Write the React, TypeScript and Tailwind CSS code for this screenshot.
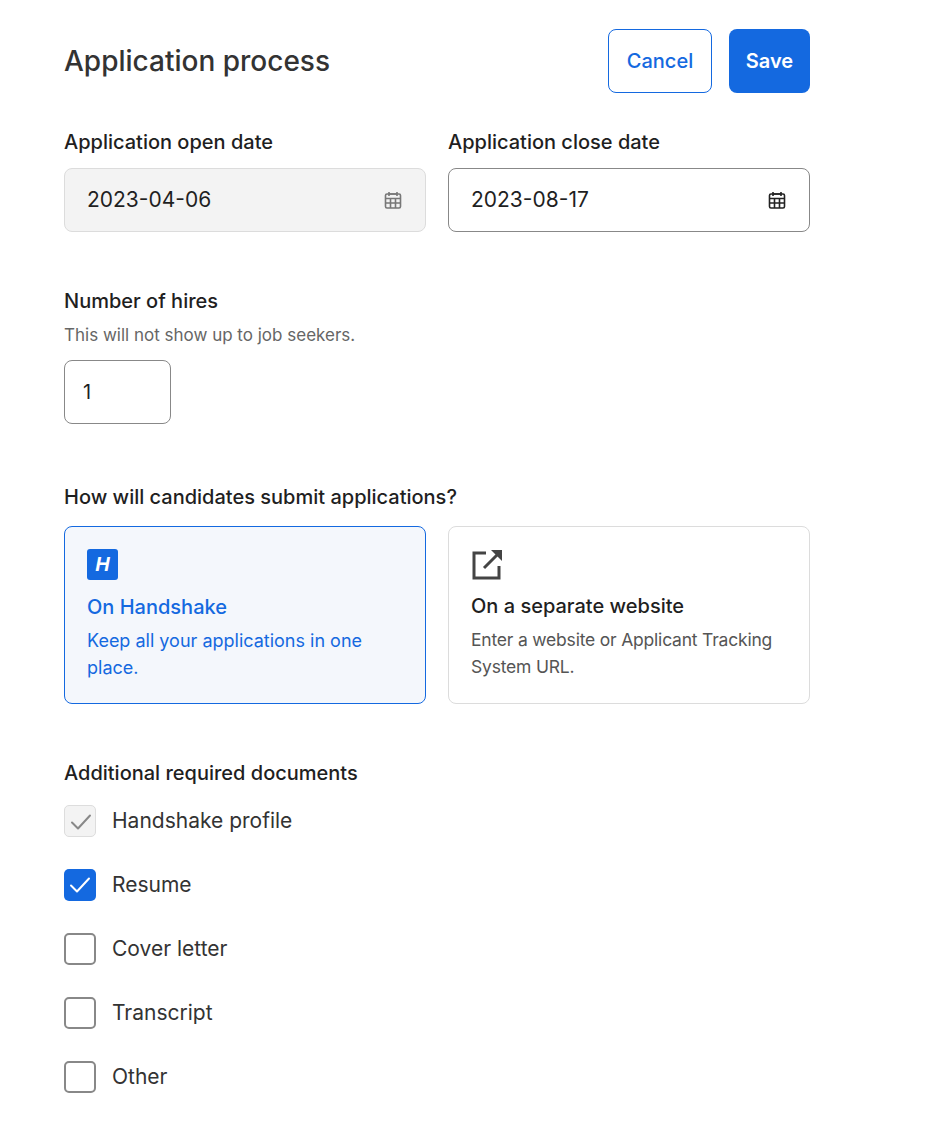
import React from "react";

const Cal = ({ c }: { c: string }) => (
  <svg width="20" height="20" viewBox="0 0 20 20" fill="none" stroke={c} strokeWidth="1.6">
    <rect x="2.5" y="4" width="15" height="14" rx="1.5" />
    <path d="M2.5 8.5h15M2.5 13h15M7.5 8.5V18M12.5 8.5V18M6 2v4M14 2v4M6 4h8" />
  </svg>
);

const Check = ({ c }: { c: string }) => (
  <svg width="32" height="32" viewBox="0 0 32 32" fill="none" stroke={c} strokeWidth="2" strokeLinecap="round" strokeLinejoin="round">
    <path d="M7 16.5l6 6L25 9.5" />
  </svg>
);

export default function App() {
  const docs = [
    { t: "Handshake profile", s: "disabled" },
    { t: "Resume", s: "on" },
    { t: "Cover letter", s: "off" },
    { t: "Transcript", s: "off" },
    { t: "Other", s: "off" },
  ];
  return (
    <div className="w-[946px] h-[1122px] bg-white text-[#1f1f1f]" style={{ fontFamily: "Inter, 'Noto Sans', sans-serif" }}>
      <div className="w-[746px] ml-[64px] pt-[29px]">
        <div className="flex items-center justify-between">
          <h1 className="text-[28px] font-medium text-[#333]">Application process</h1>
          <div className="flex gap-[17px]">
            <button className="h-[64px] w-[104px] rounded-[8px] border border-[#1469e0] text-[#1469e0] text-[20px] font-medium">Cancel</button>
            <button className="h-[64px] w-[81px] rounded-[8px] bg-[#1469e0] text-white text-[20px] font-semibold">Save</button>
          </div>
        </div>
        <div className="grid grid-cols-2 gap-[22px] mt-[34px]">
          <div>
            <div className="text-[20px] font-medium">Application open date</div>
            <div className="mt-[11px] h-[64px] rounded-[8px] border border-[#dcdcdc] bg-[#f3f3f3] flex items-center justify-between px-[22px]">
              <span className="text-[21px]">2023-04-06</span>
              <Cal c="#777" />
            </div>
          </div>
          <div>
            <div className="text-[20px] font-medium">Application close date</div>
            <div className="mt-[11px] h-[64px] rounded-[8px] border border-[#888] flex items-center justify-between px-[22px]">
              <span className="text-[21px]">2023-08-17</span>
              <Cal c="#222" />
            </div>
          </div>
        </div>
        <div className="mt-[54px] text-[20px] font-medium">Number of hires</div>
        <div className="mt-[7px] text-[17px] text-[#666]">This will not show up to job seekers.</div>
        <div className="mt-[11px] w-[107px] h-[64px] rounded-[8px] border border-[#888] flex items-center px-[18px] text-[20px]">1</div>
        <div className="mt-[58px] text-[20px] font-medium">How will candidates submit applications?</div>
        <div className="grid grid-cols-2 gap-[22px] mt-[14px]">
          <div className="h-[178px] rounded-[8px] border border-[#1469e0] bg-[#f4f7fc] px-[22px] pt-[22px]">
            <div className="w-[31px] h-[31px] rounded-[3px] bg-[#1469e0] flex items-center justify-center text-white font-bold italic text-[20px]" style={{ fontFamily: "'Liberation Sans', sans-serif" }}>H</div>
            <div className="mt-[12px] text-[20px] font-medium text-[#1469e0]">On Handshake</div>
            <div className="mt-[5px] text-[18px] leading-[27px] text-[#1469e0]">Keep all your applications in one place.</div>
          </div>
          <div className="h-[178px] rounded-[8px] border border-[#dcdcdc] px-[22px] pt-[20px]">
            <svg width="34" height="34" viewBox="0 0 34 34" fill="none" stroke="#444" strokeWidth="3">
              <path d="M15 6H3v25h25V19" />
              <path d="M13 21L29 5" />
              <path d="M20 3h11v11z" fill="#444" stroke="none" />
            </svg>
            <div className="mt-[10px] text-[20px] font-medium">On a separate website</div>
            <div className="mt-[5px] text-[17.5px] leading-[27px] text-[#555] tracking-[-0.2px]">Enter a website or Applicant Tracking System URL.</div>
          </div>
        </div>
        <div className="mt-[54px] text-[20px] font-medium">Additional required documents</div>
        <div className="mt-[17px] flex flex-col gap-[32px]">
          {docs.map((d) => (
            <div key={d.t} className="flex items-center gap-[16px] h-[32px]">
              {d.s === "disabled" && (
                <div className="w-[32px] h-[32px] rounded-[5px] border border-[#ddd] bg-[#f3f3f3]"><Check c="#888" /></div>
              )}
              {d.s === "on" && (
                <div className="w-[32px] h-[32px] rounded-[5px] bg-[#1469e0]"><Check c="#fff" /></div>
              )}
              {d.s === "off" && <div className="w-[32px] h-[32px] rounded-[5px] border-2 border-[#888]" />}
              <span className="text-[21px] text-[#333]">{d.t}</span>
            </div>
          ))}
        </div>
      </div>
    </div>
  );
}
